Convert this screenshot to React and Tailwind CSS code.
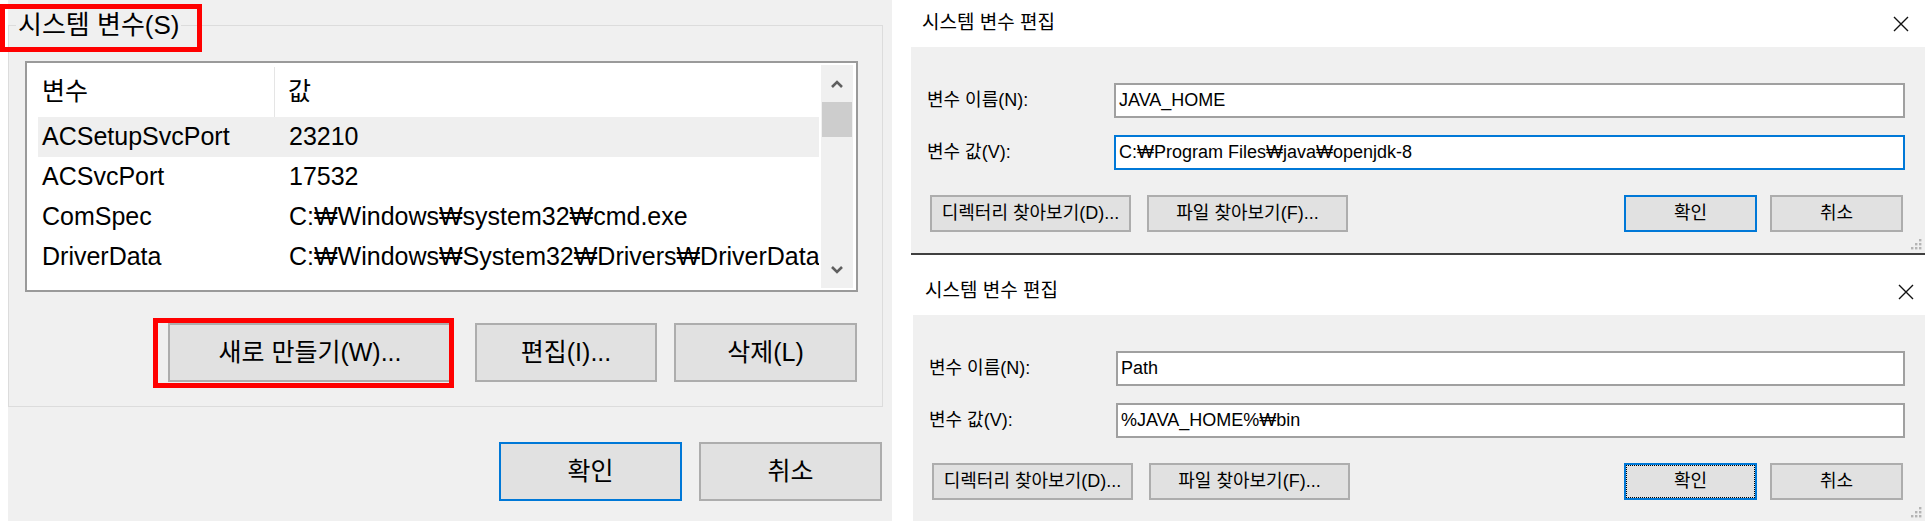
import React from "react";

const rows = [
  { name: "ACSetupSvcPort", value: "23210", selected: true },
  { name: "ACSvcPort", value: "17532" },
  { name: "ComSpec", value: "C:₩Windows₩system32₩cmd.exe" },
  { name: "DriverData", value: "C:₩Windows₩System32₩Drivers₩DriverData" },
];

function Chevron({ up }) {
  return (
    <svg width="14" height="10" viewBox="0 0 14 10">
      <path
        d={up ? "M2 8 L7 3 L12 8" : "M2 2 L7 7 L12 2"}
        fill="none"
        stroke="#5f5f5f"
        strokeWidth="2.6"
      />
    </svg>
  );
}

function CloseIcon() {
  return (
    <svg width="16" height="16" viewBox="0 0 16 16">
      <path d="M1 1 L15 15 M15 1 L1 15" stroke="#111" strokeWidth="1.4" />
    </svg>
  );
}

function Grip() {
  return (
    <svg className="absolute bottom-[3px] right-[3px]" width="12" height="12" viewBox="0 0 12 12">
      <rect x="9" y="1" width="2.4" height="2.4" fill="#b4b4b4" />
      <rect x="5" y="5" width="2.4" height="2.4" fill="#b4b4b4" />
      <rect x="9" y="5" width="2.4" height="2.4" fill="#b4b4b4" />
      <rect x="1" y="9" width="2.4" height="2.4" fill="#b4b4b4" />
      <rect x="5" y="9" width="2.4" height="2.4" fill="#b4b4b4" />
      <rect x="9" y="9" width="2.4" height="2.4" fill="#b4b4b4" />
    </svg>
  );
}

function WinButton({ children, width, primary, dotted }) {
  return (
    <div
      className={
        "flex h-full shrink-0 items-center justify-center whitespace-nowrap bg-[#e1e1e1] " +
        (primary ? "border-2 border-[#0078d7]" : "border-2 border-[#adadad]")
      }
      style={{ width }}
    >
      {dotted ? (
        <div className="flex h-full w-full items-center justify-center border border-dotted border-black">
          {children}
        </div>
      ) : (
        children
      )}
    </div>
  );
}

function EditDialog({ name, value, valueFocused, okDotted, titlePad, closePad, bodyPad }) {
  return (
    <div className="flex flex-col">
      <div
        className="flex h-[47px] items-center justify-between bg-white"
        style={{ paddingLeft: titlePad, paddingRight: closePad }}
      >
        <span className="text-[19px]">시스템 변수 편집</span>
        <CloseIcon />
      </div>
      <div
        className="relative flex flex-col bg-[#f0f0f0] pr-[20px] pt-[36px] pb-[21px] text-[18px]"
        style={{ marginLeft: bodyPad, paddingLeft: 16 }}
      >
        <div className="flex h-[35px] items-center">
          <span className="w-[187px] shrink-0">변수 이름(N):</span>
          <div className="flex h-full flex-1 items-center border-2 border-[#a0a0a0] bg-white pl-[3px]">
            {name}
          </div>
        </div>
        <div className="mt-[17px] flex h-[35px] items-center">
          <span className="w-[187px] shrink-0">변수 값(V):</span>
          <div
            className={
              "flex h-full flex-1 items-center bg-white pl-[3px] " +
              (valueFocused ? "border-2 border-[#0078d7]" : "border-2 border-[#a0a0a0]")
            }
          >
            {value}
          </div>
        </div>
        <div className="mt-[25px] flex h-[37px] items-center">
          <div className="ml-[3px] h-full">
            <WinButton width={201}>디렉터리 찾아보기(D)...</WinButton>
          </div>
          <div className="ml-[16px] h-full">
            <WinButton width={201}>파일 찾아보기(F)...</WinButton>
          </div>
          <div className="flex-1" />
          <div className="h-full">
            <WinButton width={133} primary dotted={okDotted}>
              확인
            </WinButton>
          </div>
          <div className="ml-[13px] mr-[2px] h-full">
            <WinButton width={133}>취소</WinButton>
          </div>
        </div>
        <Grip />
      </div>
    </div>
  );
}

export default function App() {
  return (
    <div className="relative flex h-[521px] w-[1925px] overflow-hidden bg-white font-['Liberation_Sans','Noto_Sans_CJK_KR',sans-serif] text-black">
      {/* 환경 변수 창 */}
      <div className="ml-[8px] flex h-full w-[884px] shrink-0 flex-col bg-[#f0f0f0] pt-[25px] text-[25px]">
        <div className="relative flex h-[382px] w-[875px] flex-col border border-[#dcdcdc]">
          <span className="absolute left-[7px] top-[-16px] bg-[#f0f0f0] px-[2px] text-[26px] leading-[30px]">
            시스템 변수(S)
          </span>
          <div className="ml-[16px] mt-[35px] flex h-[231px] w-[833px] border-2 border-[#9a9a9a] bg-white">
            <div className="flex min-w-0 flex-1 flex-col overflow-hidden pl-[11px]">
              <div className="flex h-[54px] shrink-0 items-end">
                <div className="flex h-[50px] w-[237px] shrink-0 items-center border-r border-[#e5e5e5] pl-[4px]">
                  변수
                </div>
                <div className="flex h-[50px] items-center pl-[13px]">값</div>
              </div>
              {rows.map((r) => (
                <div
                  key={r.name}
                  className={
                    "flex h-[40px] shrink-0 items-center whitespace-nowrap " +
                    (r.selected ? "bg-[#efefef]" : "")
                  }
                >
                  <span className="w-[251px] shrink-0 pl-[4px]">{r.name}</span>
                  <span>{r.value}</span>
                </div>
              ))}
            </div>
            <div className="my-[2px] ml-[2px] mr-[3px] flex w-[32px] shrink-0 flex-col bg-[#f0f0f0]">
              <div className="flex h-[37px] items-center justify-center">
                <Chevron up />
              </div>
              <div className="mx-[1px] h-[35px] bg-[#cdcdcd]" />
              <div className="flex-1" />
              <div className="flex h-[37px] items-center justify-center">
                <Chevron />
              </div>
            </div>
          </div>
          <div className="ml-[159px] mt-[31px] flex h-[59px]">
            <WinButton width={284}>새로 만들기(W)...</WinButton>
            <div className="ml-[23px] h-full">
              <WinButton width={182}>편집(I)...</WinButton>
            </div>
            <div className="ml-[17px] h-full">
              <WinButton width={183}>삭제(L)</WinButton>
            </div>
          </div>
        </div>
        <div className="mt-[35px] flex h-[59px] justify-end gap-[17px] pr-[10px]">
          <WinButton width={183} primary>
            확인
          </WinButton>
          <WinButton width={183}>취소</WinButton>
        </div>
      </div>

      {/* 시스템 변수 편집 창 */}
      <div className="ml-[19px] flex flex-1 flex-col">
        <div className="border-b-2 border-[#404040]">
          <EditDialog
            name="JAVA_HOME"
            value="C:₩Program Files₩java₩openjdk-8"
            valueFocused
            titlePad={11}
            closePad={16}
            bodyPad={0}
          />
        </div>
        <div className="mt-[13px]">
          <EditDialog
            name="Path"
            value="%JAVA_HOME%₩bin"
            okDotted
            titlePad={14}
            closePad={11}
            bodyPad={2}
          />
        </div>
      </div>

      {/* 빨간 강조 박스 */}
      <div className="pointer-events-none absolute left-0 top-[4px] h-[48px] w-[202px] border-[5px] border-[#ff0000]" />
      <div className="pointer-events-none absolute left-[153px] top-[318px] h-[70px] w-[301px] border-[5px] border-[#ff0000]" />
    </div>
  );
}
